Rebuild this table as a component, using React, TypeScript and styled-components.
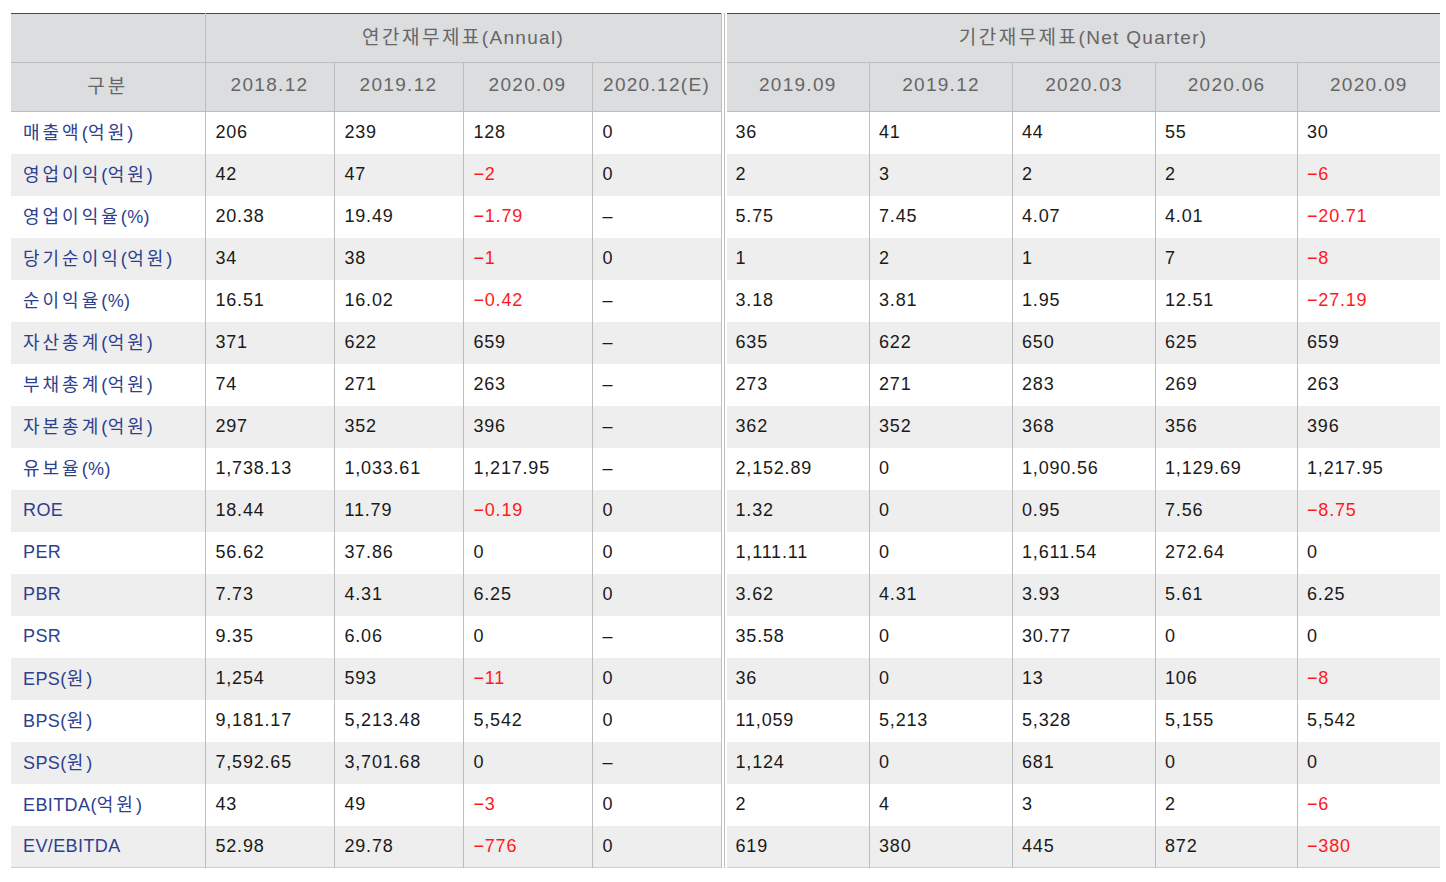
import React from 'react';
import styled, { createGlobalStyle } from 'styled-components';

const GlobalStyle = createGlobalStyle`
  html, body {
    margin: 0;
    padding: 0;
    background: #fff;
  }
  body {
    font-family: "Liberation Sans", "Noto Sans CJK KR", sans-serif;
  }
  th, td {
    box-sizing: border-box;
  }
`;

type Row = { label: string; annual: string[]; quarter: string[] };

const annualCols = ['2018.12', '2019.12', '2020.09', '2020.12(E)'];
const quarterCols = ['2019.09', '2019.12', '2020.03', '2020.06', '2020.09'];

const rows: Row[] = [
  { label: '매출액(억원)', annual: ['206', '239', '128', '0'], quarter: ['36', '41', '44', '55', '30'] },
  { label: '영업이익(억원)', annual: ['42', '47', '-2', '0'], quarter: ['2', '3', '2', '2', '-6'] },
  { label: '영업이익율(%)', annual: ['20.38', '19.49', '-1.79', '–'], quarter: ['5.75', '7.45', '4.07', '4.01', '-20.71'] },
  { label: '당기순이익(억원)', annual: ['34', '38', '-1', '0'], quarter: ['1', '2', '1', '7', '-8'] },
  { label: '순이익율(%)', annual: ['16.51', '16.02', '-0.42', '–'], quarter: ['3.18', '3.81', '1.95', '12.51', '-27.19'] },
  { label: '자산총계(억원)', annual: ['371', '622', '659', '–'], quarter: ['635', '622', '650', '625', '659'] },
  { label: '부채총계(억원)', annual: ['74', '271', '263', '–'], quarter: ['273', '271', '283', '269', '263'] },
  { label: '자본총계(억원)', annual: ['297', '352', '396', '–'], quarter: ['362', '352', '368', '356', '396'] },
  { label: '유보율(%)', annual: ['1,738.13', '1,033.61', '1,217.95', '–'], quarter: ['2,152.89', '0', '1,090.56', '1,129.69', '1,217.95'] },
  { label: 'ROE', annual: ['18.44', '11.79', '-0.19', '0'], quarter: ['1.32', '0', '0.95', '7.56', '-8.75'] },
  { label: 'PER', annual: ['56.62', '37.86', '0', '0'], quarter: ['1,111.11', '0', '1,611.54', '272.64', '0'] },
  { label: 'PBR', annual: ['7.73', '4.31', '6.25', '0'], quarter: ['3.62', '4.31', '3.93', '5.61', '6.25'] },
  { label: 'PSR', annual: ['9.35', '6.06', '0', '–'], quarter: ['35.58', '0', '30.77', '0', '0'] },
  { label: 'EPS(원)', annual: ['1,254', '593', '-11', '0'], quarter: ['36', '0', '13', '106', '-8'] },
  { label: 'BPS(원)', annual: ['9,181.17', '5,213.48', '5,542', '0'], quarter: ['11,059', '5,213', '5,328', '5,155', '5,542'] },
  { label: 'SPS(원)', annual: ['7,592.65', '3,701.68', '0', '–'], quarter: ['1,124', '0', '681', '0', '0'] },
  { label: 'EBITDA(억원)', annual: ['43', '49', '-3', '0'], quarter: ['2', '4', '3', '2', '-6'] },
  { label: 'EV/EBITDA', annual: ['52.98', '29.78', '-776', '0'], quarter: ['619', '380', '445', '872', '-380'] },
];

const Page = styled.div`
  display: flex;
  padding: 13px 0 0 11px;
`;

const QuarterWrap = styled.div`
  margin-left: 2px;
  border-left: 1px solid #bdbdbd;
  padding-left: 2px;
`;

const Table = styled.table<{ $width: number }>`
  width: ${p => p.$width}px;
  border-collapse: collapse;
  table-layout: fixed;
  border-top: 1px solid #4a4a4a;
  border-bottom: 1px solid #cfcfcf;
`;

const HeadCell = styled.th<{ $right?: boolean; $ko?: boolean }>`
  height: 49px;
  padding: 0 0 ${p => (p.$ko ? 6 : 4)}px;
  background: #dcdddf;
  color: #666;
  font-weight: normal;
  font-size: 19px;
  letter-spacing: 1.3px;
  text-align: center;
  border-bottom: 1px solid #bdbdbd;
  border-left: 1px solid #bdbdbd;
  white-space: nowrap;
  &:first-child {
    border-left: none;
  }
  ${p => (p.$right ? 'border-right: 1px solid #bdbdbd;' : '')}
`;

const Hangul = styled.span<{ $gap: number }>`
  letter-spacing: ${p => p.$gap}px;
`;

const BodyRow = styled.tr<{ $alt: boolean }>`
  background: ${p => (p.$alt ? '#eeeeee' : '#ffffff')};
`;

const LabelCell = styled.td<{ $ko: boolean }>`
  height: 42px;
  padding: 0 0 ${p => (p.$ko ? 3 : 0)}px 12px;
  color: #2d3f8e;
  font-size: 18px;
  letter-spacing: 0.4px;
  white-space: nowrap;
`;

const ValueCell = styled.td<{ $neg: boolean; $pad: number; $right?: boolean; $first?: boolean }>`
  height: 42px;
  padding: 0 0 0 ${p => p.$pad}px;
  color: ${p => (p.$neg ? '#ff1a1a' : '#1a1a1a')};
  font-size: 18px;
  letter-spacing: 0.8px;
  border-left: ${p => (p.$first ? 'none' : '1px solid #bdbdbd')};
  white-space: nowrap;
  ${p => (p.$right ? 'border-right: 1px solid #bdbdbd;' : '')}
`;

const fmt = (v: string) => (v.startsWith('-') ? '−' + v.slice(1) : v);
const hasKo = (s: string) => /[가-힣]/.test(s);

// Hangul glyphs in the original are wider than the fallback font, so spread them out
const Spaced = ({ text, gap }: { text: string; gap: number }) => (
  <>
    {text.split(/([가-힣]+)/).map((part, i) =>
      hasKo(part) ? (
        <Hangul key={i} $gap={gap}>
          {part}
        </Hangul>
      ) : (
        part
      )
    )}
  </>
);

export default function App() {
  return (
    <>
      <GlobalStyle />
      <Page>
        <Table $width={710}>
          <colgroup>
            <col style={{ width: 194 }} />
            {annualCols.map(c => (
              <col key={c} style={{ width: 129 }} />
            ))}
          </colgroup>
          <thead>
            <tr>
              <HeadCell />
              <HeadCell colSpan={4} $right $ko>
                <Spaced text="연간재무제표(Annual)" gap={2.5} />
              </HeadCell>
            </tr>
            <tr>
              <HeadCell $ko>
                <Spaced text="구분" gap={3} />
              </HeadCell>
              {annualCols.map((c, i) => (
                <HeadCell key={c} $right={i === annualCols.length - 1}>
                  {c}
                </HeadCell>
              ))}
            </tr>
          </thead>
          <tbody>
            {rows.map((r, i) => (
              <BodyRow key={r.label} $alt={i % 2 === 1}>
                <LabelCell $ko={hasKo(r.label)}>
                  <Spaced text={r.label} gap={3} />
                </LabelCell>
                {r.annual.map((v, j) => (
                  <ValueCell key={j} $neg={v.startsWith('-')} $pad={10} $right={j === r.annual.length - 1}>
                    {fmt(v)}
                  </ValueCell>
                ))}
              </BodyRow>
            ))}
          </tbody>
        </Table>
        <QuarterWrap>
          <Table $width={713}>
            <colgroup>
              {quarterCols.map((c, i) => (
                <col key={c + i} style={{ width: i < 3 ? 143 : 142 }} />
              ))}
            </colgroup>
            <thead>
              <tr>
                <HeadCell colSpan={5} $ko>
                  <Spaced text="기간재무제표(Net Quarter)" gap={2.5} />
                </HeadCell>
              </tr>
              <tr>
                {quarterCols.map(c => (
                  <HeadCell key={c}>{c}</HeadCell>
                ))}
              </tr>
            </thead>
            <tbody>
              {rows.map((r, i) => (
                <BodyRow key={r.label} $alt={i % 2 === 1}>
                  {r.quarter.map((v, j) => (
                    <ValueCell key={j} $neg={v.startsWith('-')} $pad={9} $first={j === 0}>
                      {fmt(v)}
                    </ValueCell>
                  ))}
                </BodyRow>
              ))}
            </tbody>
          </Table>
        </QuarterWrap>
      </Page>
    </>
  );
}
